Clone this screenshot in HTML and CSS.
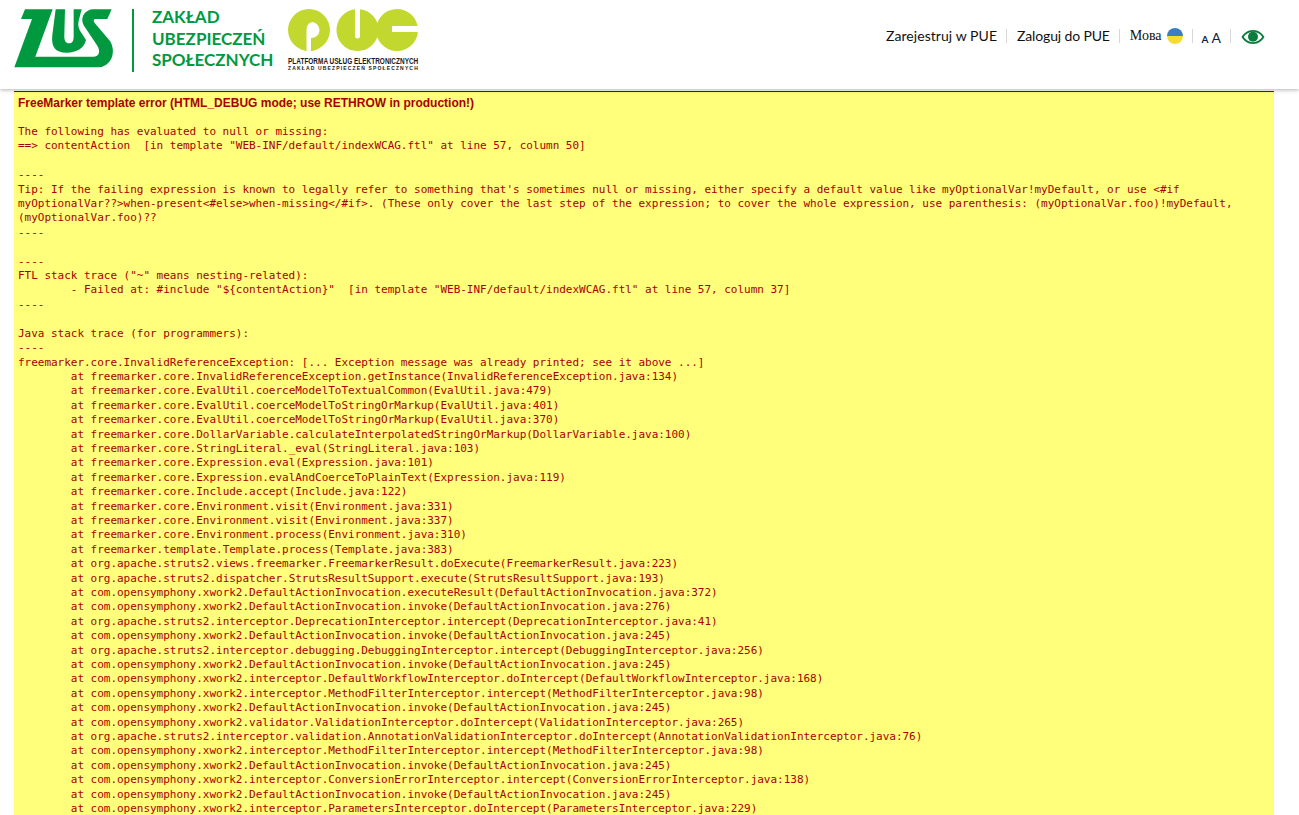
FILE: index.html
```html
<!DOCTYPE html>
<html lang="pl">
<head>
<meta charset="utf-8">
<title>PUE ZUS</title>
<link rel="stylesheet" href="styles.css">
</head>
<body>
<header class="header">
  <div class="brand">
    <svg class="zus-logo" width="120" height="72" viewBox="0 0 360 216" aria-label="ZUS">
      <path class="zus-fill" d="M45 13H128L76 155H250C268 155 272 138 262 122L222 62C208 38 225 13 252 13H305L292 42H258C250 42 250 48 254 54L300 108C320 140 305 187 262 187H13L66 42H33Z"/>
      <path class="zus-fill" d="M137 13H165L163 90C162 108 168 115 177 115C186 115 191 108 191 95V13H215L208 40C202 60 205 70 215 85L228 105C222 130 200 143 170 143C135 143 123 125 127 90Z"/>
    </svg>
    <div class="brand-rule"></div>
    <div class="brand-name">
      <span>ZAKŁAD</span>
      <span>UBEZPIECZEŃ</span>
      <span>SPOŁECZNYCH</span>
    </div>
    <div class="pue">
      <svg class="pue-logo" width="131" height="42" viewBox="0 0 131 42" aria-label="PUE">
        <path class="pue-fill" fill-rule="evenodd" d="M22 0A21 21 0 1 1 22 42A21 21 0 1 1 22 0ZM25 13A8 8 0 0 0 19.500 21V42H24V29A8 8 0 0 0 25 13Z"/>
        <path class="pue-fill" d="M68 .15A21 21 0 1 0 73 .15V27A2.500 2.500 0 0 1 68 27Z"/>
        <path class="pue-fill" d="M110 0A21 21 0 0 1 130.600 17H105V23H130.900A21 21 0 1 1 110 0Z"/>
      </svg>
      <div class="pue-title">PLATFORMA USŁUG ELEKTRONICZNYCH</div>
      <div class="pue-sub">ZAKŁAD UBEZPIECZEŃ SPOŁECZNYCH</div>
    </div>
  </div>
  <nav class="nav">
    <a class="nav-item register">Zarejestruj w PUE</a>
    <a class="nav-item login">Zaloguj do PUE</a>
    <a class="nav-item lang"><span class="lang-text">Мова</span><span class="flag"></span></a>
    <a class="nav-item sizes"><span class="size-small">A</span><span class="size-large">A</span></a>
    <a class="nav-item eye">
      <svg class="eye-icon" width="24" height="16" viewBox="0 0 24 16" aria-label="Wersja kontrastowa">
        <path class="eye-fill" fill-rule="evenodd" d="M12 1C6.500 1 2.500 4.500 .5 8C2.500 11.500 6.500 15 12 15C17.500 15 21.500 11.500 23.500 8C21.500 4.500 17.500 1 12 1ZM12 2.800C15.800 2.800 19.200 5 21.300 8C19.200 11 15.800 13.200 12 13.200C8.200 13.200 4.800 11 2.700 8C4.800 5 8.200 2.800 12 2.800Z"/>
        <circle class="eye-fill" cx="12" cy="7.800" r="5"/>
      </svg>
    </a>
  </nav>
</header>
<main class="error">
<div class="error-title">FreeMarker template error (HTML_DEBUG mode; use RETHROW in production!)</div>
<pre class="trace">
The following has evaluated to null or missing:
==&gt; contentAction  [in template "WEB-INF/default/indexWCAG.ftl" at line 57, column 50]

----
Tip: If the failing expression is known to legally refer to something that's sometimes null or missing, either specify a default value like myOptionalVar!myDefault, or use &lt;#if myOptionalVar??&gt;when-present&lt;#else&gt;when-missing&lt;/#if&gt;. (These only cover the last step of the expression; to cover the whole expression, use parenthesis: (myOptionalVar.foo)!myDefault, (myOptionalVar.foo)??
----

----
FTL stack trace ("~" means nesting-related):
	- Failed at: #include "${contentAction}"  [in template "WEB-INF/default/indexWCAG.ftl" at line 57, column 37]
----

Java stack trace (for programmers):
----
freemarker.core.InvalidReferenceException: [... Exception message was already printed; see it above ...]
	at freemarker.core.InvalidReferenceException.getInstance(InvalidReferenceException.java:134)
	at freemarker.core.EvalUtil.coerceModelToTextualCommon(EvalUtil.java:479)
	at freemarker.core.EvalUtil.coerceModelToStringOrMarkup(EvalUtil.java:401)
	at freemarker.core.EvalUtil.coerceModelToStringOrMarkup(EvalUtil.java:370)
	at freemarker.core.DollarVariable.calculateInterpolatedStringOrMarkup(DollarVariable.java:100)
	at freemarker.core.StringLiteral._eval(StringLiteral.java:103)
	at freemarker.core.Expression.eval(Expression.java:101)
	at freemarker.core.Expression.evalAndCoerceToPlainText(Expression.java:119)
	at freemarker.core.Include.accept(Include.java:122)
	at freemarker.core.Environment.visit(Environment.java:331)
	at freemarker.core.Environment.visit(Environment.java:337)
	at freemarker.core.Environment.process(Environment.java:310)
	at freemarker.template.Template.process(Template.java:383)
	at org.apache.struts2.views.freemarker.FreemarkerResult.doExecute(FreemarkerResult.java:223)
	at org.apache.struts2.dispatcher.StrutsResultSupport.execute(StrutsResultSupport.java:193)
	at com.opensymphony.xwork2.DefaultActionInvocation.executeResult(DefaultActionInvocation.java:372)
	at com.opensymphony.xwork2.DefaultActionInvocation.invoke(DefaultActionInvocation.java:276)
	at org.apache.struts2.interceptor.DeprecationInterceptor.intercept(DeprecationInterceptor.java:41)
	at com.opensymphony.xwork2.DefaultActionInvocation.invoke(DefaultActionInvocation.java:245)
	at org.apache.struts2.interceptor.debugging.DebuggingInterceptor.intercept(DebuggingInterceptor.java:256)
	at com.opensymphony.xwork2.DefaultActionInvocation.invoke(DefaultActionInvocation.java:245)
	at com.opensymphony.xwork2.interceptor.DefaultWorkflowInterceptor.doIntercept(DefaultWorkflowInterceptor.java:168)
	at com.opensymphony.xwork2.interceptor.MethodFilterInterceptor.intercept(MethodFilterInterceptor.java:98)
	at com.opensymphony.xwork2.DefaultActionInvocation.invoke(DefaultActionInvocation.java:245)
	at com.opensymphony.xwork2.validator.ValidationInterceptor.doIntercept(ValidationInterceptor.java:265)
	at org.apache.struts2.interceptor.validation.AnnotationValidationInterceptor.doIntercept(AnnotationValidationInterceptor.java:76)
	at com.opensymphony.xwork2.interceptor.MethodFilterInterceptor.intercept(MethodFilterInterceptor.java:98)
	at com.opensymphony.xwork2.DefaultActionInvocation.invoke(DefaultActionInvocation.java:245)
	at com.opensymphony.xwork2.interceptor.ConversionErrorInterceptor.intercept(ConversionErrorInterceptor.java:138)
	at com.opensymphony.xwork2.DefaultActionInvocation.invoke(DefaultActionInvocation.java:245)
	at com.opensymphony.xwork2.interceptor.ParametersInterceptor.doIntercept(ParametersInterceptor.java:229)
</pre>
</main>
</body>
</html>
```
FILE: styles.css
```css
html, body {
  margin: 0;
  height: 815px;
  overflow: hidden;
  background: #fff;
}
.header {
  height: 89px;
  box-sizing: border-box;
  display: flex;
  justify-content: space-between;
  padding: 5px 34px 0 10px;
  box-shadow: 0 1px 4px rgba(0, 0, 0, .3);
  position: relative;
  font-family: Lato, sans-serif;
}
.brand {
  display: flex;
  align-items: flex-start;
}
.zus-fill { fill: #00993f; }
.brand-rule {
  width: 2px;
  height: 63px;
  margin: 4px 0 0 2px;
  background: #00993f;
}
.brand-name {
  display: flex;
  flex-direction: column;
  margin: 1px 0 0 18px;
  color: #00993f;
  font-size: 17px;
  font-weight: 700;
  line-height: 21.500px;
  width: 135px;
  white-space: nowrap;
}
.pue { margin-top: 4px; }
.pue-logo { display: block; }
.pue-fill { fill: #c3d82e; }
.pue-title {
  font-family: "Liberation Sans", sans-serif;
  font-weight: 700;
  font-size: 9.500px;
  line-height: 9px;
  margin: 5px 0 0 1px;
  white-space: nowrap;
  color: #1a1a1a;
  transform: scaleX(.68);
  transform-origin: left;
  width: 190px;
}
.pue-sub {
  font-family: "Liberation Sans", sans-serif;
  font-weight: 700;
  font-size: 5px;
  line-height: 6px;
  letter-spacing: 1.150px;
  margin-left: 1px;
  white-space: nowrap;
  color: #1a1a1a;
}
.nav {
  display: flex;
  align-items: center;
  height: 17px;
  margin-top: 22px;
  color: #111;
  font-size: 14px;
}
.nav-item {
  display: flex;
  align-items: center;
  height: 14px;
  padding: 0 10px;
  border-left: 1px solid #d8d8d8;
}
.register { border-left: 0; padding-right: 9px; letter-spacing: .06px; }
.login { padding-right: 9px; letter-spacing: -.14px; }
.lang { padding-right: 9px; }
.lang-text {
  font-family: "Liberation Serif", serif;
  font-size: 14px;
}
.flag {
  width: 16px;
  height: 16px;
  margin-left: 5px;
  border-radius: 50%;
  background: linear-gradient(#3b7ec4 50%, #f5dc32 50%);
}
.sizes { padding: 0 9px; gap: 3px; align-items: baseline; color: #0b1f4a; }
.size-small { font-size: 10px; font-weight: 700; }
.size-large { font-size: 14px; font-weight: 400; }
.eye { padding-right: 0; }
.eye-icon { margin-top: 2px; }
.eye-fill { fill: #0a7d3c; }
.error {
  box-sizing: border-box;
  margin: 2px 25px 0 14px;
  padding: 4px;
  height: 730px;
  overflow: hidden;
  border-top: 1px solid #7a1010;
  background: #ffff7c;
  color: #a80000;
}
.error-title {
  font-family: "Liberation Sans", sans-serif;
  font-size: 12px;
  font-weight: 700;
  line-height: 14px;
}
.trace {
  margin: 0;
  padding-top: 15px;
  font-family: "DejaVu Sans Mono", monospace;
  font-size: 11px;
  letter-spacing: -.022px;
  line-height: 14.400px;
  white-space: pre-wrap;
  tab-size: 8;
}
```
